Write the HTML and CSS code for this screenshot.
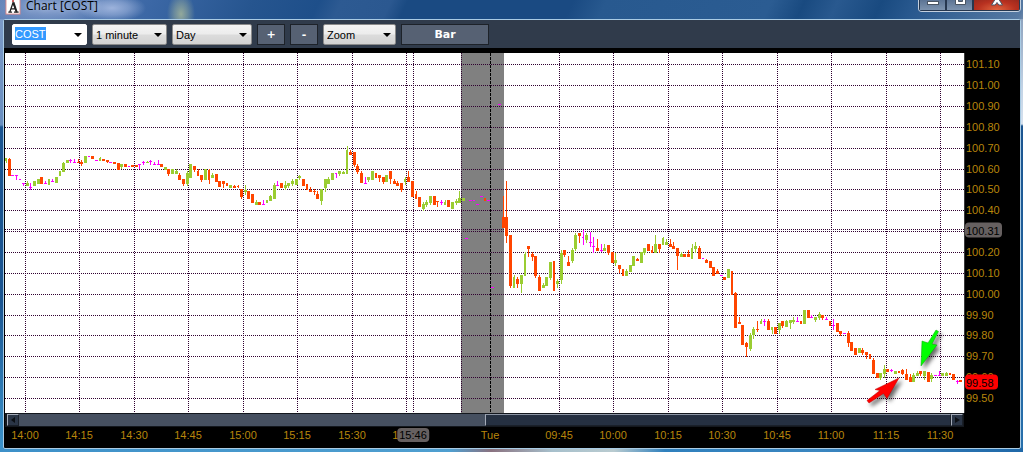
FILE: index.html
```html
<!DOCTYPE html>
<html lang="en">
<head>
<meta charset="utf-8">
<title>Chart [COST]</title>
<link rel="stylesheet" href="styles.css">
</head>
<body>
<div class="window">
  <header class="titlebar">
    <svg class="app-icon" viewBox="0 0 16 16" aria-hidden="true">
      <rect x="0.5" y="-2" width="15" height="17" fill="#fff" stroke="#d88"/>
      <path d="M3 13h4M9 13h5M4.500 13L8 3L12 13M6 9.500h4.500" fill="none" stroke="#222" stroke-width="1.400"/>
      <path d="M8.500 2.500L12 13" fill="none" stroke="#222" stroke-width="2"/>
      <circle cx="8" cy="1" r="1" fill="#b22"/>
    </svg>
    <h1 class="title">Chart [COST]</h1>
    <div class="caption-buttons">
      <button class="caption" aria-label="Minimize"><svg viewBox="0 0 14 12"><rect x="1.500" y="7.500" width="11" height="3" fill="#fff" stroke="#4a5563"/></svg></button>
      <button class="caption" aria-label="Maximize"><svg viewBox="0 0 14 12"><path d="M2.500 0.500h10v10h-10zM5.500 4.500h4v3h-4z" fill="#fff" fill-rule="evenodd" stroke="#4a5563"/></svg></button>
      <button class="caption close" aria-label="Close"><svg viewBox="0 0 14 12"><path d="M2 0.500h3.500L7 3l1.500-2.500H12L9 5.500l3.500 5.500H8.800L7 8.500 5.200 11H1.500L5 5.500z" fill="#fff" stroke="#4a5563"/></svg></button>
    </div>
  </header>
  <main class="client">
    <div class="toolbar">
      <div class="combo symbol">
        <input class="symbol-input" type="text" value="COST" aria-label="Symbol">
        <button class="drop" aria-label="Symbol list"><span class="arrow"></span></button>
      </div>
      <div class="combo interval"><select class="pick" aria-label="Interval"><option>1 minute</option></select><span class="arrow"></span></div>
      <div class="combo period"><select class="pick" aria-label="Period"><option>Day</option></select><span class="arrow"></span></div>
      <button class="tool small">+</button>
      <button class="tool small">-</button>
      <div class="combo zoom"><select class="pick" aria-label="Zoom"><option>Zoom</option></select><span class="arrow"></span></div>
      <button class="tool bar">Bar</button>
    </div>
    <div class="chart">
      <svg class="plot" id="plot" viewBox="5 53 959 360" preserveAspectRatio="none" role="img" aria-label="COST one minute candles">
        <rect x="461" y="53" width="43" height="360" fill="#808080"/>
        <g id="grid" shape-rendering="crispEdges" stroke="#300030" stroke-dasharray="1 1"></g>
        <path d="M490.500 53V413" stroke="#000" stroke-dasharray="3 1" shape-rendering="crispEdges"/>
        <g id="candles" shape-rendering="crispEdges"></g>
        <g class="pointer">
          <path d="M899 378L875 389.500L880 390.500L867 400.500L869 403L883.500 393.500L887 398.500Z" fill="#f00" stroke="#b00" stroke-width="0.500"/>
          <path d="M921 366L922 341L928 343L936 330L938.500 331.500L932 344L937 345Z" fill="#0f0" stroke="#0a0" stroke-width="0.500"/>
        </g>
      </svg>
      <div class="price-axis" id="prices"></div>
      <div class="scrollbar">
        <button class="scroll-end" aria-label="Scroll left"><svg viewBox="0 0 10 10"><path d="M7 2v6L3 5z" fill="#0b0f14"/></svg></button>
        <div class="track"><div class="thumb"></div></div>
        <button class="scroll-end" aria-label="Scroll right"><svg viewBox="0 0 10 10"><path d="M3 2v6l5-3z" fill="#0b0f14"/></svg></button>
      </div>
      <div class="time-axis" id="times"></div>
    </div>
  </main>
</div>
<script src="chart.js"></script>
</body>
</html>
```
FILE: styles.css
```css
* { box-sizing: border-box; }
body {
  margin: 0;
  font-family: "Liberation Sans", Arial, sans-serif;
  font-size: 11px;
  color: #000;
}
button, input, select { font: inherit; margin: 0; }
.window {
  height: 100vh;
  display: grid;
  grid-template-rows: 19px 1fr;
  padding: 0 2px 3px 3px;
  background:
    linear-gradient(90deg, #3d90c8 0%, #4f9fd0 44%, #8a7280 48%, #a7c0cc 54%, #b9cbd0 60%, #2f80bd 65%, #3a86c0 80%, #1f68a8 100%) bottom / 100% 4px no-repeat,
    linear-gradient(#7f9cc8 0, #6a8fc0 125px, #1b5591 127px, #1b5591 300px, #3c94cc 452px) left / 4px 100% no-repeat,
    linear-gradient(#8097b5 0, #c3d4e6 90px, #d5e1ee 124px, #1c5590 126px, #2870ac 100%) right / 3px 100% no-repeat,
    #1b5591;
}
.titlebar {
  display: flex;
  align-items: flex-start;
  gap: 5px;
  margin: 0 -2px 0 -3px;
  padding: 0 2px 0 5px;
  overflow: hidden;
  background:
    radial-gradient(ellipse 14px 22px at 181px 14px, #93a99b 0, #93a99b88 50%, transparent 100%),
    radial-gradient(ellipse 34px 14px at 112px 8px, #9db3dc 0, #9db3dc99 50%, transparent 100%),
    radial-gradient(ellipse 60px 20px at 50px 8px, #89a2cf 0, transparent 100%),
    linear-gradient(115deg, #6383b8 0, #3b67a5 140px, #26558f 230px, #1e4f8a 290px, #2d5a92 310px, #2b5890 355px, #1a4a82 370px, #1a4a82 520px, #28598f 550px, #2b5c92 700px, #194a80 730px, #29598f 760px, #194a80 800px, #28588e 830px, #5679a2 930px, #6d88aa 100%);
}
.app-icon { width: 16px; height: 15px; }
.title {
  margin: 0;
  flex: 1;
  font-family: "Open Sans", "Noto Sans", sans-serif;
  font-size: 12px;
  font-weight: 400;
  line-height: 12px;
  text-shadow: 0 0 5px #c5d3ec;
}
.caption-buttons {
  display: flex;
  height: 12px;
  border: 1px solid #c4d0df;
  border-top: 0;
  border-radius: 0 0 4px 4px;
  overflow: hidden;
}
.caption {
  width: 27px;
  padding: 0;
  display: flex;
  justify-content: center;
  align-items: flex-end;
  border: 1px solid #26374f;
  border-top: 0;
  background: linear-gradient(#5c7494, #7d93ae);
}
.caption svg { width: 14px; height: 12px; margin-bottom: 4px; flex: none; }
.caption.close { width: 47px; background: radial-gradient(ellipse at 50% 100%, #e0663f, #b83120 60%, #98281d); }
.client {
  min-height: 0;
  display: grid;
  grid-template-rows: auto 1fr;
  border: 1px solid #a9cbe4;
  border-radius: 2px;
  background: #000;
}
.toolbar {
  display: flex;
  align-items: center;
  gap: 5px;
  padding: 4px 8px 3px;
  background: #303b4b;
}
.combo {
  position: relative;
  display: flex;
  align-items: center;
  height: 21px;
  border: 1px solid #8b8b8b;
  border-radius: 2px;
  background: linear-gradient(#f4f4f4 0, #ececec 48%, #dcdcdc 52%, #d2d2d2);
}
.combo.symbol { width: 75px; padding-left: 2px; justify-content: space-between; background: #fff; border-color: #fff; }
.combo.interval { width: 75px; }
.combo.period { width: 80px; }
.combo.zoom { width: 73px; }
.symbol-input {
  width: 31px;
  height: 13px;
  padding: 0;
  border: 0;
  margin-bottom: 2px;
  background: #3399ff;
  color: #fff;
}
.drop { width: 16px; height: 19px; padding: 0; border: 0; background: none; position: relative; }
.pick {
  appearance: none;
  width: 100%;
  height: 19px;
  padding: 0 16px 0 3px;
  border: 0;
  background: none;
  color: #000;
}
.arrow {
  position: absolute;
  right: 4px;
  top: 8px;
  border: 4px solid transparent;
  border-top-color: #000;
  border-bottom: 0;
  pointer-events: none;
}
.tool {
  height: 21px;
  padding: 0;
  border: 1px solid #1d2229;
  background: #566173;
  color: #fff;
  font-family: "DejaVu Sans", sans-serif;
  font-size: 11px;
  font-weight: 700;
}
.tool.small { width: 28px; }
.tool.bar { width: 88px; }
.chart {
  min-height: 0;
  display: grid;
  grid-template-columns: 1fr 56px;
  grid-template-rows: 1fr 14px 21px;
  padding-top: 5px;
  padding-left: 1px;
}
.plot { width: 100%; height: 100%; min-height: 0; display: block; background: #fff; }
.pointer { filter: drop-shadow(3px 3px 2px #0009); }
.price-axis, .time-axis { position: relative; color: #b8860b; line-height: 14px; }
.price-axis { border-left: 1px solid #3a3a3a; }
.scrollbar, .time-axis { grid-column: 1; }
.tick { position: absolute; white-space: nowrap; }
.price-axis .tick { left: 1px; transform: translateY(-50%); }
.time-axis .tick { top: 1px; transform: translateX(-50%); }
.tick.marker { border-radius: 4px; background: #666060; color: #000; }
.price-axis .tick.marker { left: 0; padding: 1px 2px 0 1px; }
.time-axis .tick.marker { padding: 0 2px; }
.price-axis .tick.last { background: #f00; padding-right: 4px; }
.scrollbar { display: flex; padding: 1px 1px 1px 2px; background: #14181e; }
.scroll-end {
  width: 12px;
  height: 12px;
  padding: 0;
  display: flex;
  border: 1px solid #1a2029;
  border-top-color: #a4abb8;
  border-left-color: #a4abb8;
  background: #2a3546;
}
.scroll-end svg { width: 10px; height: 10px; }
.track { flex: 1; display: flex; justify-content: flex-end; background: #465060; }
.thumb { width: 50%; border: 1px solid #1a2029; border-top-color: #8c95a4; border-left-color: #a4abb8; background: #253041; }
```
FILE: chart.js
```js
// Each candle: kind, x, width, body top, body bottom, wick top, wick bottom
const data = `
G 5 2 158 161 158 163|R 8 3 159 176 158 176|M 11 3 175|M 15 3 175 176 175 180|M 19 2 179|M 22 3 183 184 183 186
G 26 3 183 186 181 186|M 29 3 187 188 183 190|G 33 3 181 186|G 37 3 179 184|R 40 3 177 184|M 44 3 183 184 181 184
G 48 2 179 185|M 51 3 181 182 179 182|G 55 3 177 183|G 59 2 171 176|G 62 3 163 172 162 172|G 66 3 160 163|M 69 3 160 161 159 163
M 73 3 162 163 159 163|R 77 3 162 163 159 163|R 80 3 162 164 160 166|G 84 3 156 163|M 88 2 156|R 91 3 156 159|M 95 3 160
G 99 2 158 161 157 161|R 102 3 159 161|R 106 3 160 162 160 163|M 109 3 162|R 113 3 162 164|R 117 3 163 170|G 120 3 164 167 164 169
R 124 3 164 167|M 128 2 166|R 131 3 165 167|R 135 3 165 167|M 138 3 164 165 164 169|M 142 3 162 163 161 165|G 146 3 162 163 161 163
M 149 3 161 162 160 165|M 153 3 164 165 162 165|M 157 3 164 165 160 165|R 160 3 164 167|G 164 3 167 170|R 167 3 169 174 169 176
G 171 3 169 174|G 175 3 171 174 169 174|R 178 3 175 180 173 180|R 182 3 179 184 179 186|G 186 3 173 184 171 186|G 189 3 164 178
R 193 3 166 170 166 172|R 197 2 171 176 169 176|R 200 3 175 180 175 182|G 204 3 169 180|R 208 2 170 180 169 184|G 211 3 175 178 173 178
R 215 3 174 182|R 218 3 181 187|R 222 3 181 184 181 188|R 226 2 183 186|G 229 3 185 188|R 233 3 186 188 185 188|R 237 2 186 187 185 188
R 240 3 189 197 189 199|G 244 3 190 192 185 195|R 247 3 191 199|R 251 3 194 203|G 255 3 202 205 200 205|R 258 3 202 205|M 262 3 204 205 200 205
G 266 2 200 203|G 269 3 196 201 195 201|G 273 3 185 199 183 199|M 276 3 185 186 181 186|R 280 3 183 188|G 284 3 185 188 181 190
G 287 3 183 186 183 188|G 291 3 181 184 179 186|G 295 3 179 185|G 298 3 176 178 175 180|R 302 3 179 186|R 306 2 184 190|R 309 3 190 192 187 192
R 313 3 191 192 189 195|R 316 3 194 199 191 199|G 320 3 189 201 189 205|G 324 3 179 188 179 192|G 327 3 179 184 177 184|G 331 3 173 180
M 335 2 173 174 173 178|G 338 3 171 174 171 176|G 342 3 172 174 171 174|G 346 2 150 174 146 174|R 349 3 152 155 150 155|R 353 3 152 165 152 167
R 356 3 166 172 164 174|R 360 3 173 183 171 183|M 364 3 183 184 177 184|G 367 3 177 180 177 182|G 371 3 171 180|R 375 2 173 178
R 378 3 175 178 175 182|R 382 3 177 182 177 184|G 385 3 175 182|R 389 3 171 179 171 184|R 393 3 181 184 179 184|R 396 3 183 186 181 186
R 400 3 183 190 183 192|G 404 2 179 182 177 185|R 407 3 177 182 171 182|R 411 3 181 197|R 415 2 194 199 191 199|R 418 3 197 207
G 422 3 204 209 202 211|G 425 3 202 205 200 207|G 429 3 196 203 196 205|R 433 3 196 205|R 436 3 201 202 201 207|M 440 3 202 203 200 205
G 444 2 202 205 200 205|R 447 3 200 207|G 451 3 202 209|G 455 3 201 203 199 205|G 458 3 198 203 191 203|G 462 3 198 201|M 465 3 238
M 469 3 200|M 473 2 200|M 476 3 204|M 480 3 196|R 484 2 198 201|M 487 3 200|M 491 3 287|M 498 3 104|R 502 3 217 228 196 228
R 505 3 217 236 181 243|R 509 3 235 286 235 288|G 513 2 277 288 275 288|R 516 3 279 284 277 288|G 520 3 275 284 275 293|G 524 2 254 276 252 276
R 527 3 246 249 246 257|R 531 3 254 257 252 261|R 534 3 256 276 256 278|R 538 3 277 291 275 291|G 542 3 285 288 283 288|G 545 3 277 286
G 549 3 262 278 262 280|R 553 2 261 291|G 556 3 281 284 279 288|G 560 3 253 280 250 284|R 563 3 250 255 250 257|R 567 3 262 266 256 266
G 571 3 250 261 248 263|G 574 3 235 249 233 251|R 578 3 233 236 233 243|M 582 2 237 238 230 245|G 585 3 235 240 233 243|M 589 3 242 243 232 247
M 592 3 246 247 237 253|R 596 3 248 251 239 251|M 600 3 250 251 244 252|G 603 3 248 251 244 251|R 607 3 245 253 245 255|R 611 3 252 263
G 614 3 260 263 253 266|R 618 3 265 269 265 273|R 622 2 269 276|G 625 3 271 276 269 276|G 629 3 265 272|G 632 3 256 266|R 636 3 259 261 258 261
G 640 3 252 263|G 643 3 248 253 248 255|R 647 3 244 251|R 651 2 250 253 246 253|G 654 3 244 253 235 253|R 658 3 244 249 244 253
G 662 2 238 245 237 245|G 665 3 242 245 239 245|R 669 3 244 247 239 247|R 672 3 246 249 242 249|R 676 3 248 256 248 270|G 680 3 254 257 252 257
R 683 3 254 257|R 687 3 254 257 250 257|G 691 2 248 259 244 259|G 694 3 246 249 242 253|R 698 3 248 259 246 259|M 702 2 258|R 705 3 260 263 259 263
R 709 3 261 268|R 712 3 267 276|R 716 3 271 274 269 274|M 720 3 275|R 723 3 277 280|G 727 3 269 278|R 731 2 271 295|R 734 3 293 328 292 328
R 738 3 322 324 317 324|R 741 3 325 345|R 745 3 343 347 342 357|G 749 3 335 349 333 351|G 752 3 329 335 327 339|R 756 3 329 330 321 332
G 760 2 321 324 319 324|M 763 3 321 322 319 326|R 767 3 321 330 319 330|G 771 2 327 330 327 334|R 774 3 327 334|G 778 3 323 330 323 334
R 781 3 321 326 321 328|G 785 3 321 327 320 327|G 789 3 320 323 320 329|G 792 3 320 322 317 324|M 796 3 321 322 317 322|R 800 2 321 324
G 803 3 310 324|R 807 3 310 318|M 810 3 317 318 315 318|G 814 3 317 320 317 322|G 818 3 314 318 312 320|R 821 3 315 318 315 320|M 825 3 319 320 317 320
R 829 2 321 326|M 832 3 325 326 319 330|R 836 3 323 332|R 839 3 331 334 331 336|M 843 3 333|R 847 3 333 343 331 347|R 850 3 342 351|R 854 3 348 355
G 858 3 348 353|R 861 3 350 353 348 355|R 865 3 352 355 352 359|R 869 2 354 359|R 872 3 360 374 358 374|R 876 3 373 378|G 879 3 373 378 373 380
G 883 3 369 374 365 378|R 886 3 369 372|M 890 3 370 371 369 372|G 894 3 371 374|R 898 2 371 373|R 901 3 370 374 369 375|R 905 3 374 380 369 380
R 909 3 377 382 374 382|G 912 3 375 382 373 382|G 916 3 373 376 371 376|R 919 3 371 374 371 376|G 923 3 371 376 371 380|R 927 3 372 382
G 930 3 375 379 373 382|M 934 3 375|M 938 3 375 376 371 376|G 941 3 373 376|G 945 3 373 376 372 376|R 949 2 373 375|R 952 3 374 380|M 956 3 381 382 380 384|R 959 3 380 382`;

const colors = { G: "#9acd32", R: "#ff4500", M: "#ff00ff" };
const rect = (x, y, w, h, fill) => `<rect x="${x}" y="${y}" width="${w}" height="${h}" fill="${fill}"/>`;

document.getElementById("candles").innerHTML = data.trim().split(/[|\n]/).map(row => {
  const [kind, ...values] = row.trim().split(" ");
  const [x, w, top, bottom = top + 1, high = top, low = bottom] = values.map(Number);
  return rect(x, top, w, bottom - top, colors[kind]) + rect(x + 1, high, 1, low - high, colors[kind]);
}).join("");

const columns = [25, 79, 134, 188, 243, 297, 352, 406, 413, 461, 559, 613, 668, 722, 777, 831, 886, 940];
const rows = [64, 85, 106, 127, 148, 169, 189, 210, 229, 231, 252, 273, 294, 315, 335, 356, 377, 398];
document.getElementById("grid").innerHTML =
  columns.map(x => `<path d="M${x}.5 53V413"/>`).join("") +
  rows.map(y => `<path d="M5 ${y}.5H964"/>`).join("");

const prices = [[64, "101.10"], [85, "101.00"], [106, "100.90"], [127, "100.80"], [148, "100.70"], [169, "100.60"],
  [189, "100.50"], [210, "100.40"], [252, "100.20"], [273, "100.10"], [294, "100.00"], [315, "99.90"],
  [335, "99.80"], [356, "99.70"], [377, "99.60"], [398, "99.50"], [230, "100.31", "marker"], [382, "99.58", "marker last"]];
document.getElementById("prices").innerHTML = prices.map(([y, text, extra = ""]) =>
  `<span class="tick ${extra}" style="top:${(y - 53) / 3.6}%">${text}</span>`).join("");

const times = [[25, "14:00"], [79, "14:15"], [134, "14:30"], [188, "14:45"], [243, "15:00"], [297, "15:15"],
  [352, "15:30"], [406, "15:45"], [490, "Tue"], [559, "09:45"], [613, "10:00"], [668, "10:15"], [722, "10:30"],
  [777, "10:45"], [831, "11:00"], [886, "11:15"], [940, "11:30"], [413, "15:46", "marker"]];
document.getElementById("times").innerHTML = times.map(([x, text, extra = ""]) =>
  `<span class="tick ${extra}" style="left:${(x - 5) / 9.59}%">${text}</span>`).join("");
```
